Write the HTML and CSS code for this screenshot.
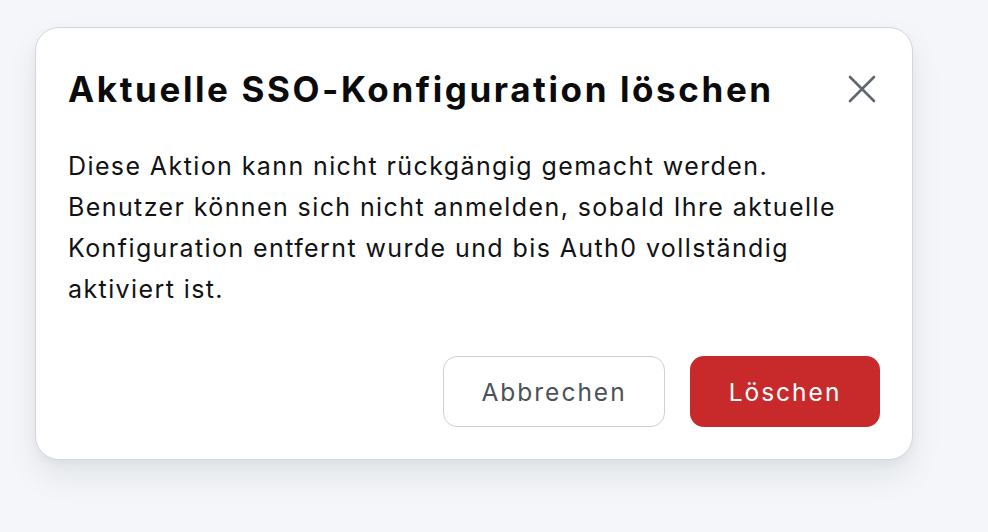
FILE: index.html
```html
<!DOCTYPE html>
<html lang="de">
<head>
<meta charset="utf-8">
<link rel="stylesheet" href="styles.css">
</head>
<body>
<div class="dialog">
  <div class="header">
    <h2 class="title">Aktuelle SSO-Konfiguration löschen</h2>
    <button class="close" aria-label="Schließen">
      <svg width="28" height="28" viewBox="0 0 28 28" fill="none" stroke="#5f6670" stroke-width="2.6" stroke-linecap="round"><path d="M2 2L26 26M26 2L2 26"/></svg>
    </button>
  </div>
  <p class="body">Diese Aktion kann nicht rückgängig gemacht werden. Benutzer können sich nicht anmelden, sobald Ihre aktuelle Konfiguration entfernt wurde und bis Auth0 vollständig aktiviert ist.</p>
  <div class="actions">
    <button class="btn btn-secondary">Abbrechen</button>
    <button class="btn btn-danger">Löschen</button>
  </div>
</div>
</body>
</html>
```
FILE: styles.css
```css
html, body {
  margin: 0;
  height: 100%;
}
body {
  background: #f4f6f9;
  font-family: Inter, "Noto Sans", sans-serif;
  padding: 27px 0 0 35px;
  box-sizing: border-box;
}
.dialog {
  box-sizing: border-box;
  width: 878px;
  height: 433px;
  background: #fff;
  border: 1.5px solid #d3d7dc;
  border-radius: 24px;
  box-shadow: 0 16px 32px rgba(15, 23, 42, 0.08), 0 4px 8px rgba(15, 23, 42, 0.04);
  padding: 36px 32px 32px 32px;
  display: flex;
  flex-direction: column;
}
.header {
  display: flex;
  align-items: center;
  justify-content: space-between;
}
.title {
  margin: 0;
  font-size: 35px;
  font-weight: 700;
  letter-spacing: 2.6px;
  color: #0b0b0c;
  line-height: 50px;
  white-space: nowrap;
}
.close {
  background: none;
  border: 0;
  padding: 0;
  margin-right: 4px;
  width: 28px;
  height: 28px;
  display: flex;
}
.body {
  margin: 32px 0 0 0;
  font-size: 25px;
  letter-spacing: 1.4px;
  line-height: 41px;
  color: #111214;
}
.actions {
  margin-top: auto;
  display: flex;
  justify-content: flex-end;
  gap: 25px;
}
.btn {
  font-family: inherit;
  font-size: 24.5px;
  letter-spacing: 2px;
  height: 71px;
  border-radius: 14px;
  padding: 0;
  cursor: pointer;
}
.btn-secondary {
  width: 222px;
  background: #fff;
  border: 1.5px solid #ccd1d7;
  color: #4b525a;
}
.btn-danger {
  width: 190px;
  background: #c82a2b;
  border: 0;
  color: #fff;
}
```
